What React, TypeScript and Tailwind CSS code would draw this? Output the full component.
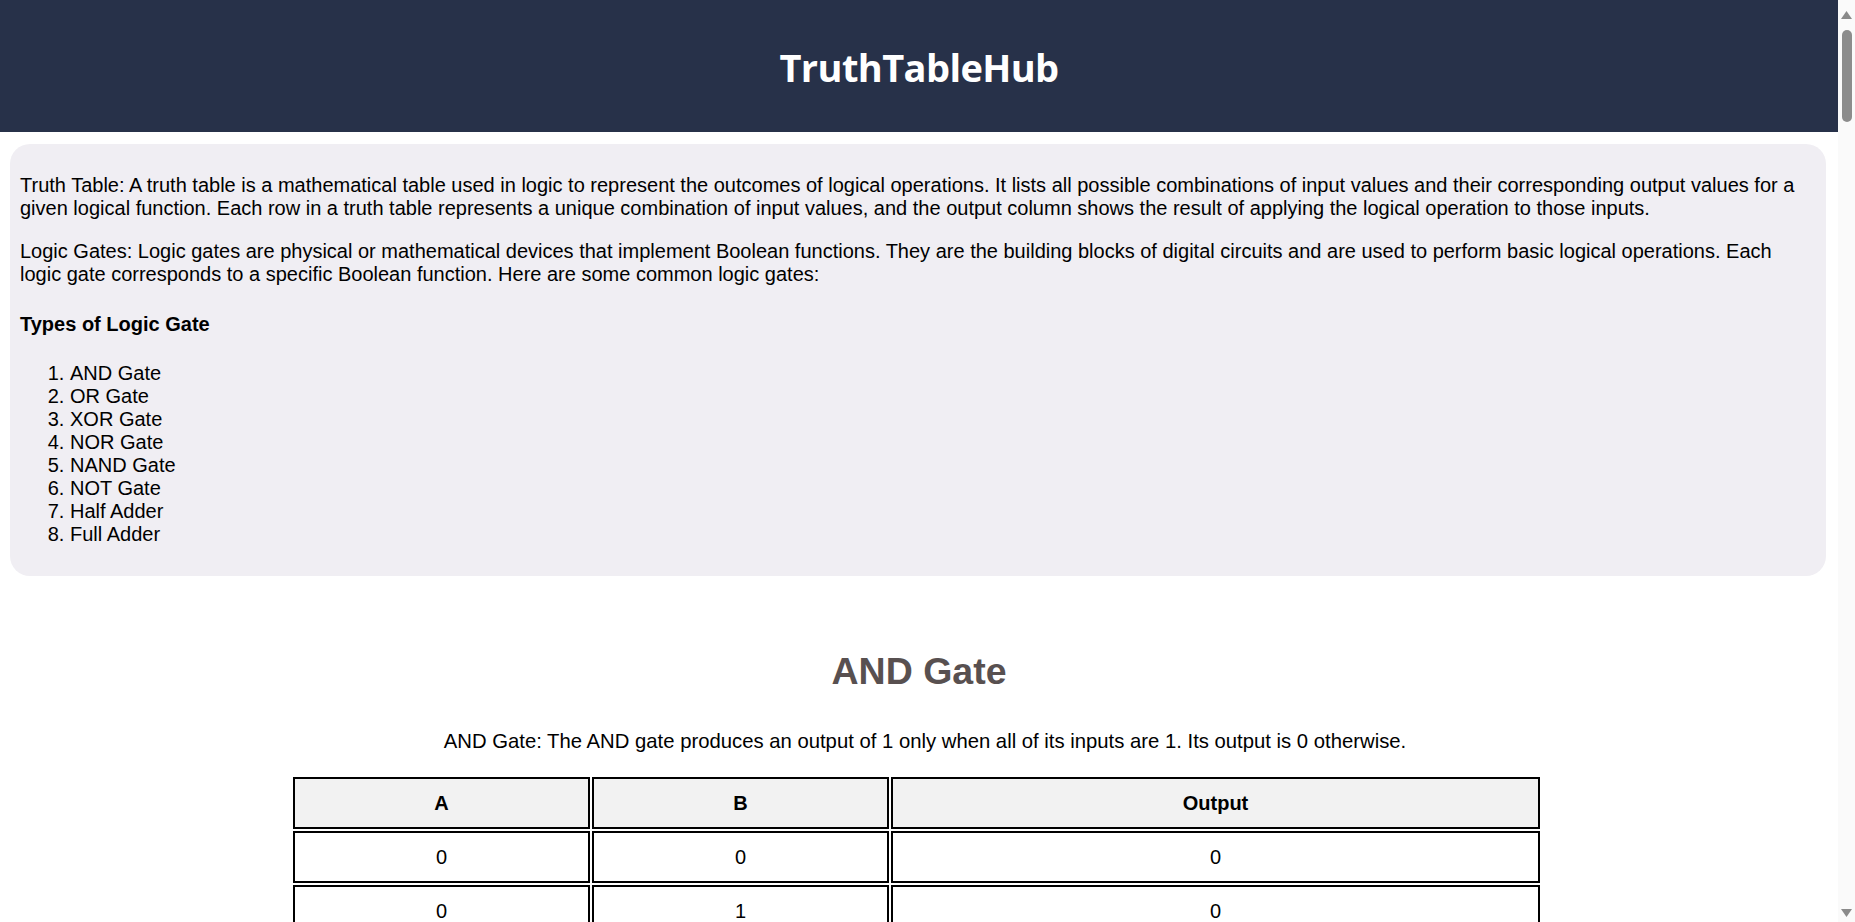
import React from "react";

type Gate = {
  name: string;
  desc: string;
  headers: string[];
  rows: (string | number)[][];
};

const gates: Gate[] = [
  {
    name: "AND Gate",
    desc: "AND Gate: The AND gate produces an output of 1 only when all of its inputs are 1. Its output is 0 otherwise.",
    headers: ["A", "B", "Output"],
    rows: [
      [0, 0, 0],
      [0, 1, 0],
      [1, 0, 0],
      [1, 1, 1],
    ],
  },
  {
    name: "OR Gate",
    desc: "OR Gate: The OR gate produces an output of 1 if at least one of its inputs is 1. Its output is 0 only when all inputs are 0.",
    headers: ["A", "B", "Output"],
    rows: [
      [0, 0, 0],
      [0, 1, 1],
      [1, 0, 1],
      [1, 1, 1],
    ],
  },
  {
    name: "XOR Gate",
    desc: "XOR Gate: The XOR gate produces an output of 1 when the number of 1 inputs is odd. Its output is 0 otherwise.",
    headers: ["A", "B", "Output"],
    rows: [
      [0, 0, 0],
      [0, 1, 1],
      [1, 0, 1],
      [1, 1, 0],
    ],
  },
  {
    name: "NOR Gate",
    desc: "NOR Gate: The NOR gate produces an output of 1 only when all of its inputs are 0. Its output is 0 otherwise.",
    headers: ["A", "B", "Output"],
    rows: [
      [0, 0, 1],
      [0, 1, 0],
      [1, 0, 0],
      [1, 1, 0],
    ],
  },
  {
    name: "NAND Gate",
    desc: "NAND Gate: The NAND gate produces an output of 0 only when all of its inputs are 1. Its output is 1 otherwise.",
    headers: ["A", "B", "Output"],
    rows: [
      [0, 0, 1],
      [0, 1, 1],
      [1, 0, 1],
      [1, 1, 0],
    ],
  },
  {
    name: "NOT Gate",
    desc: "NOT Gate: The NOT gate produces the inverse of its input. An input of 1 gives 0 and an input of 0 gives 1.",
    headers: ["A", "Output"],
    rows: [
      [0, 1],
      [1, 0],
    ],
  },
  {
    name: "Half Adder",
    desc: "Half Adder: A half adder adds two single binary digits and produces a sum and a carry.",
    headers: ["A", "B", "Sum", "Carry"],
    rows: [
      [0, 0, 0, 0],
      [0, 1, 1, 0],
      [1, 0, 1, 0],
      [1, 1, 0, 1],
    ],
  },
  {
    name: "Full Adder",
    desc: "Full Adder: A full adder adds three binary digits, two inputs and a carry in, and produces a sum and a carry out.",
    headers: ["A", "B", "Cin", "Sum", "Cout"],
    rows: [
      [0, 0, 0, 0, 0],
      [0, 0, 1, 1, 0],
      [0, 1, 0, 1, 0],
      [0, 1, 1, 0, 1],
      [1, 0, 0, 1, 0],
      [1, 0, 1, 0, 1],
      [1, 1, 0, 0, 1],
      [1, 1, 1, 1, 1],
    ],
  },
];

const listItems = [
  "AND Gate",
  "OR Gate",
  "XOR Gate",
  "NOR Gate",
  "NAND Gate",
  "NOT Gate",
  "Half Adder",
  "Full Adder",
];

function GateSection({ gate, first }: { gate: Gate; first: boolean }) {
  return (
    <section className={first ? "mt-[74px]" : "mt-[60px]"}>
      <h2 className="text-center text-[37.5px] leading-[43px] font-bold text-[#585050] mb-[37px]">
        {gate.name}
      </h2>
      <p className="text-center pl-[12px] text-[20.3px] leading-[23px] text-black mb-[22px]">
        {gate.desc}
      </p>
      <table className="ml-[291px] w-[1251px] table-fixed border-separate border-spacing-[2px] text-[20px] leading-[23px]">
        <thead>
          <tr>
            {gate.headers.map((h, i) => (
              <th
                key={h}
                className={
                  "border-2 border-black bg-[#f2f2f2] py-[12.5px] px-[12px] text-center font-bold " +
                  (gate.headers.length === 3
                    ? i === 2
                      ? "w-[649px]"
                      : "w-[297px]"
                    : "")
                }
              >
                {h}
              </th>
            ))}
          </tr>
        </thead>
        <tbody>
          {gate.rows.map((r, ri) => (
            <tr key={ri}>
              {r.map((c, ci) => (
                <td
                  key={ci}
                  className="border-2 border-black bg-white py-[12.5px] px-[12px] text-center"
                >
                  {c}
                </td>
              ))}
            </tr>
          ))}
        </tbody>
      </table>
    </section>
  );
}

function FakeScrollbar() {
  return (
    <div className="fixed top-0 right-0 h-screen w-[17px] bg-[#fafafa] flex flex-col items-center">
      <svg width="11" height="8" viewBox="0 0 11 8" className="mt-[11px]">
        <path d="M5.5 0 L11 8 L0 8 Z" fill="#8a8a8a" />
      </svg>
      <div className="mt-[11px] w-[10px] h-[92px] rounded-full bg-[#8c8c8c]" />
      <div className="flex-1" />
      <svg width="11" height="8" viewBox="0 0 11 8" className="mb-[5px]">
        <path d="M0 0 L11 0 L5.5 8 Z" fill="#8a8a8a" />
      </svg>
    </div>
  );
}

export default function App() {
  return (
    <div className="min-h-screen bg-white text-black font-['Liberation_Sans',Arial,sans-serif]">
      <div className="w-[calc(100%-17px)] pb-[60px]">
        <header className="h-[132px] bg-[#273149] flex items-center justify-center">
          <h1 className="font-['Open_Sans',sans-serif] text-white text-[38px] font-bold tracking-[-0.6px] leading-none mt-[2px]">
            TruthTableHub
          </h1>
        </header>

        <div className="mt-[12px] ml-[10px] mr-[12px] rounded-[20px] bg-[#f0eef3] px-[10px] py-[10px]">
          <p className="my-[20px] text-[20px] leading-[23px]">
            Truth Table: A truth table is a mathematical table used in logic to represent the outcomes of logical
            operations. It lists all possible combinations of input values and their corresponding output values for a
            given logical function. Each row in a truth table represents a unique combination of input values, and the
            output column shows the result of applying the logical operation to those inputs.
          </p>
          <p className="my-[20px] text-[20px] leading-[23px]">
            Logic Gates: Logic gates are physical or mathematical devices that implement Boolean functions. They are the
            building blocks of digital circuits and are used to perform basic logical operations. Each logic gate
            corresponds to a specific Boolean function. Here are some common logic gates:
          </p>
          <h4 className="mt-[26.6px] mb-[26.6px] text-[20px] leading-[23px] font-bold">Types of Logic Gate</h4>
          <ol className="list-decimal pl-[50px] my-[20px] text-[20px] leading-[23px]">
            {listItems.map((it) => (
              <li key={it}>{it}</li>
            ))}
          </ol>
        </div>

        {gates.map((g, i) => (
          <GateSection key={g.name} gate={g} first={i === 0} />
        ))}
      </div>
      <FakeScrollbar />
    </div>
  );
}
